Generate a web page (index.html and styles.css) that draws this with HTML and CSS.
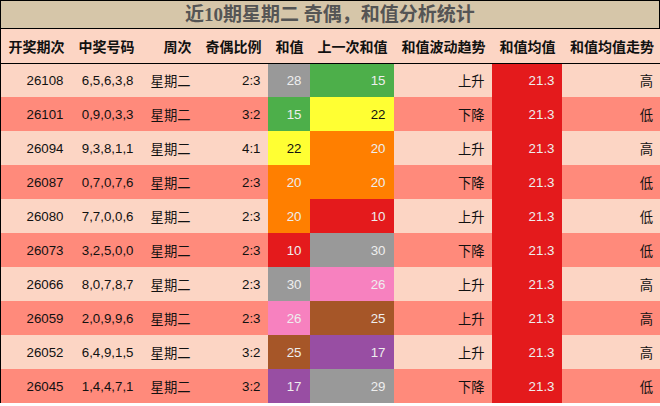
FILE: index.html
```html
<!DOCTYPE html>
<html lang="zh">
<head>
<meta charset="utf-8">
<link rel="stylesheet" href="styles.css">
</head>
<body>
<div class="wrap">
  <div class="title">近10期星期二 奇偶，和值分析统计</div>
  <table class="stats">
    <colgroup>
      <col class="c1"><col class="c2"><col class="c3"><col class="c4"><col class="c5"><col class="c6"><col class="c7"><col class="c8"><col class="c9">
    </colgroup>
    <thead>
      <tr><th>开奖期次</th><th>中奖号码</th><th>周次</th><th>奇偶比例</th><th>和值</th><th>上一次和值</th><th>和值波动趋势</th><th>和值均值</th><th>和值均值走势</th></tr>
    </thead>
    <tbody>
      <tr class="lt"><td>26108</td><td>6,5,6,3,8</td><td>星期二</td><td>2:3</td><td class="gray">28</td><td class="green">15</td><td>上升</td><td class="red">21.3</td><td>高</td></tr>
      <tr class="dk"><td>26101</td><td>0,9,0,3,3</td><td>星期二</td><td>3:2</td><td class="green">15</td><td class="yellow">22</td><td>下降</td><td class="red">21.3</td><td>低</td></tr>
      <tr class="lt"><td>26094</td><td>9,3,8,1,1</td><td>星期二</td><td>4:1</td><td class="yellow">22</td><td class="orange">20</td><td>上升</td><td class="red">21.3</td><td>高</td></tr>
      <tr class="dk"><td>26087</td><td>0,7,0,7,6</td><td>星期二</td><td>2:3</td><td class="orange">20</td><td class="orange">20</td><td>下降</td><td class="red">21.3</td><td>低</td></tr>
      <tr class="lt"><td>26080</td><td>7,7,0,0,6</td><td>星期二</td><td>2:3</td><td class="orange">20</td><td class="red">10</td><td>上升</td><td class="red">21.3</td><td>低</td></tr>
      <tr class="dk"><td>26073</td><td>3,2,5,0,0</td><td>星期二</td><td>2:3</td><td class="red">10</td><td class="gray">30</td><td>下降</td><td class="red">21.3</td><td>低</td></tr>
      <tr class="lt"><td>26066</td><td>8,0,7,8,7</td><td>星期二</td><td>2:3</td><td class="gray">30</td><td class="pink">26</td><td>上升</td><td class="red">21.3</td><td>高</td></tr>
      <tr class="dk"><td>26059</td><td>2,0,9,9,6</td><td>星期二</td><td>2:3</td><td class="pink">26</td><td class="brown">25</td><td>上升</td><td class="red">21.3</td><td>高</td></tr>
      <tr class="lt"><td>26052</td><td>6,4,9,1,5</td><td>星期二</td><td>3:2</td><td class="brown">25</td><td class="purple">17</td><td>上升</td><td class="red">21.3</td><td>高</td></tr>
      <tr class="dk"><td>26045</td><td>1,4,4,7,1</td><td>星期二</td><td>3:2</td><td class="purple">17</td><td class="gray">29</td><td>下降</td><td class="red">21.3</td><td>低</td></tr>
    </tbody>
  </table>
</div>
</body>
</html>
```

FILE: styles.css
```css
html, body {
  margin: 0;
  padding: 0;
  background: #ffffff;
}

.wrap {
  width: 660px;
}

.title {
  box-sizing: border-box;
  height: 29px;
  border: 1px solid #000;
  background: #d6c6a9;
  color: #555;
  font-family: "Liberation Serif", "Noto Sans CJK SC", serif;
  font-weight: bold;
  font-size: 19px;
  line-height: 27px;
  text-align: center;
}

.stats {
  width: 660px;
  table-layout: fixed;
  border-collapse: collapse;
  border-left: 1px solid #000;
  border-right: 1px solid #000;
  font-family: "Liberation Sans", "Noto Sans CJK SC", sans-serif;
}

.c1 { width: 70px; }
.c2 { width: 70px; }
.c3 { width: 57px; }
.c4 { width: 70px; }
.c5 { width: 42px; }
.c6 { width: 84px; }
.c7 { width: 98px; }
.c8 { width: 70px; }
.c9 { width: 99px; }

.stats th,
.stats td {
  height: 34px;
  padding: 0 7px 0 0;
  text-align: right;
  white-space: nowrap;
  overflow: hidden;
  box-sizing: border-box;
}

.stats thead tr {
  background: #fcd5c4;
  border-bottom: 1px solid #000;
}

.stats th {
  height: 34px;
  font-size: 14px;
  font-weight: bold;
  color: #111;
  padding-right: 6px;
}

.stats td {
  font-size: 13.3px;
  color: #111;
}

.stats td:nth-child(5),
.stats td:nth-child(6) {
  padding-right: 8px;
}

.lt { background: #fcd5c4; }
.dk { background: #ff8a7b; }

.stats td.gray   { background: #999999; color: #eeeeee; }
.stats td.green  { background: #4daf4a; color: #eeeeee; }
.stats td.yellow { background: #ffff33; color: #111111; }
.stats td.orange { background: #ff7f00; color: #eeeeee; }
.stats td.red    { background: #e41a1c; color: #eeeeee; }
.stats td.pink   { background: #f781bf; color: #eeeeee; }
.stats td.brown  { background: #a65628; color: #eeeeee; }
.stats td.purple { background: #984ea3; color: #eeeeee; }
```
